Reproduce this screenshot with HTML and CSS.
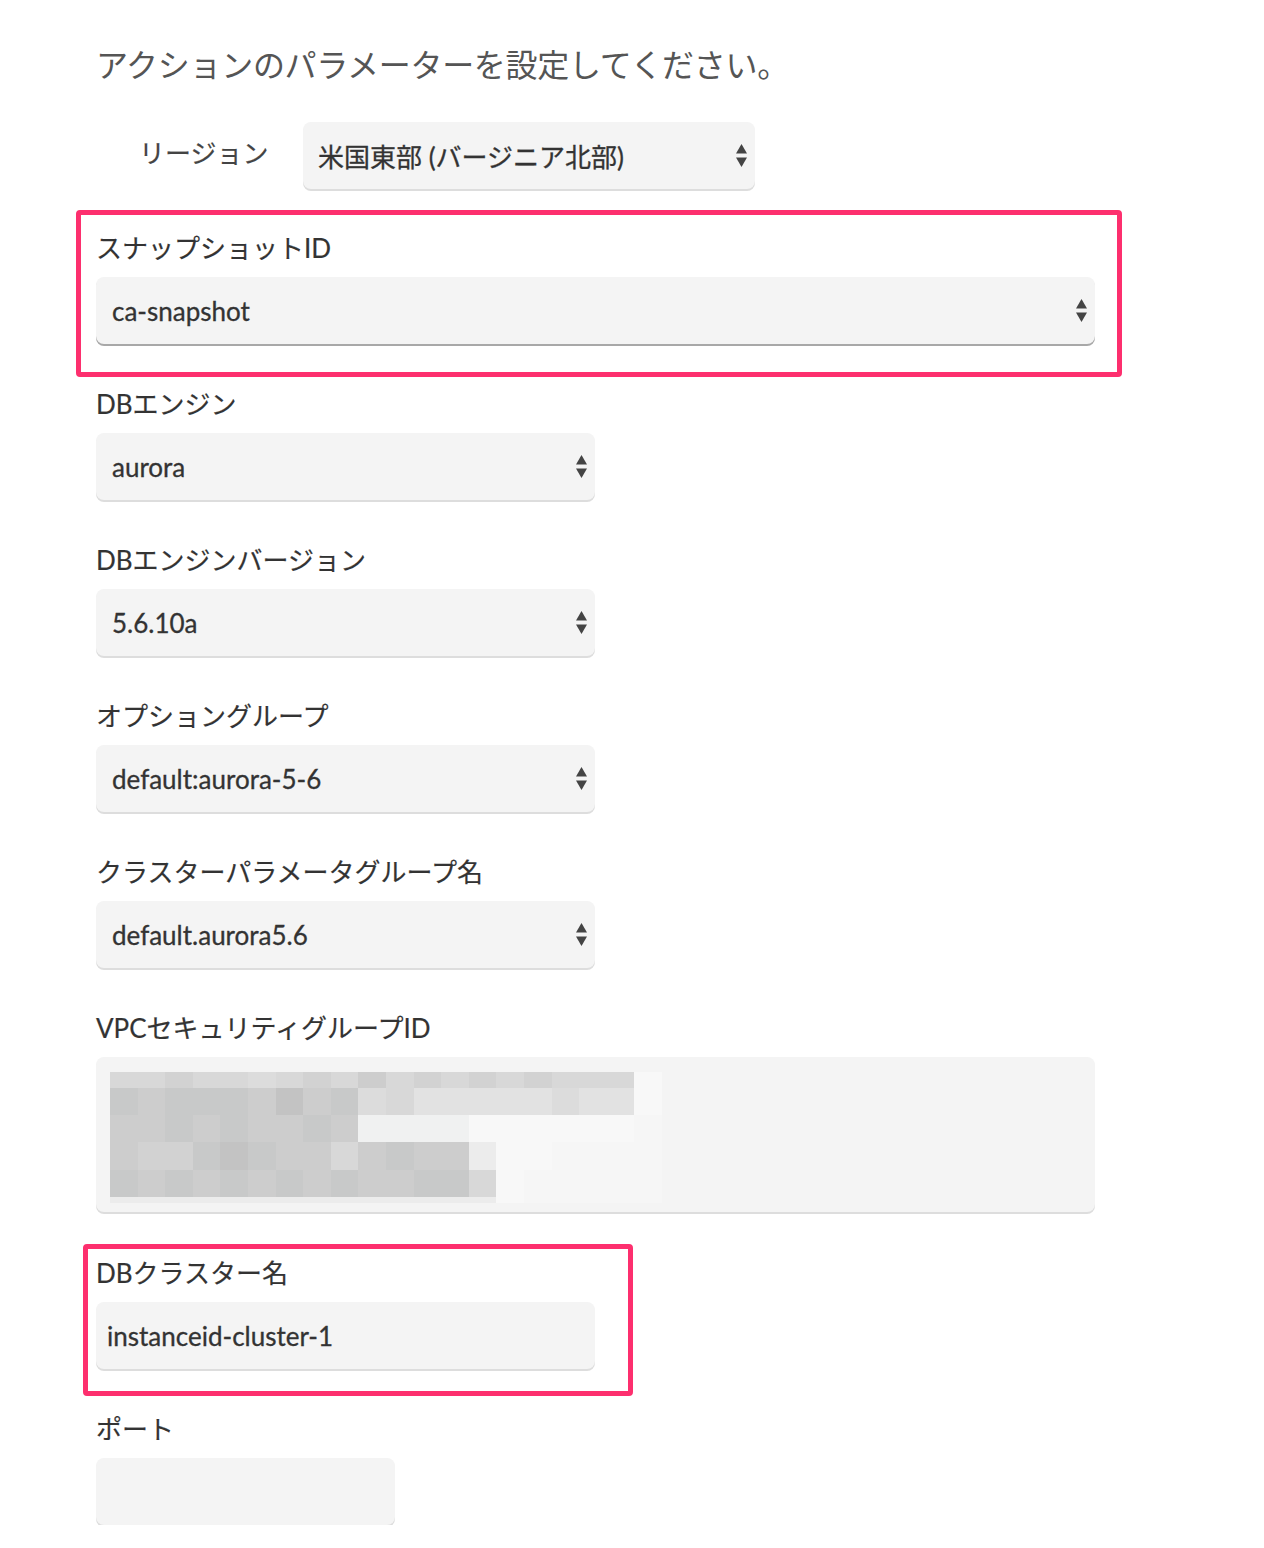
FILE: index.html
```html
<!DOCTYPE html>
<html lang="ja">
<head>
<meta charset="utf-8">
<title>アクションのパラメーター</title>
<link rel="stylesheet" href="styles.css">
</head>
<body>
<main class="form">
  <h1 class="title">アクションのパラメーターを設定してください。</h1>

  <div class="region-row">
    <span class="region-label">リージョン</span>
    <div class="control select region-select">
      <span class="value">米国東部 (バージニア北部)</span>
      <svg class="arrows" width="11" height="25" viewBox="0 0 11 25"><polygon points="0,10.5 5.5,1 11,10.5"/><polygon points="0,14.5 11,14.5 5.5,24"/></svg>
    </div>
  </div>

  <div class="highlight hl-snapshot">
    <div class="label">スナップショットID</div>
    <div class="control select full focused">
      <span class="value">ca-snapshot</span>
      <svg class="arrows" width="11" height="25" viewBox="0 0 11 25"><polygon points="0,10.5 5.5,1 11,10.5"/><polygon points="0,14.5 11,14.5 5.5,24"/></svg>
    </div>
  </div>

  <div class="field">
    <div class="label">DBエンジン</div>
    <div class="control select half">
      <span class="value">aurora</span>
      <svg class="arrows" width="11" height="25" viewBox="0 0 11 25"><polygon points="0,10.5 5.5,1 11,10.5"/><polygon points="0,14.5 11,14.5 5.5,24"/></svg>
    </div>
  </div>

  <div class="field">
    <div class="label">DBエンジンバージョン</div>
    <div class="control select half">
      <span class="value">5.6.10a</span>
      <svg class="arrows" width="11" height="25" viewBox="0 0 11 25"><polygon points="0,10.5 5.5,1 11,10.5"/><polygon points="0,14.5 11,14.5 5.5,24"/></svg>
    </div>
  </div>

  <div class="field">
    <div class="label">オプショングループ</div>
    <div class="control select half">
      <span class="value">default:aurora-5-6</span>
      <svg class="arrows" width="11" height="25" viewBox="0 0 11 25"><polygon points="0,10.5 5.5,1 11,10.5"/><polygon points="0,14.5 11,14.5 5.5,24"/></svg>
    </div>
  </div>

  <div class="field">
    <div class="label">クラスターパラメータグループ名</div>
    <div class="control select half">
      <span class="value">default.aurora5.6</span>
      <svg class="arrows" width="11" height="25" viewBox="0 0 11 25"><polygon points="0,10.5 5.5,1 11,10.5"/><polygon points="0,14.5 11,14.5 5.5,24"/></svg>
    </div>
  </div>

  <div class="field field-vpc">
    <div class="label">VPCセキュリティグループID</div>
    <div class="control textarea full">
      <div class="mosaic">
        <i class="g5"></i><i class="g5"></i><i class="g4"></i><i class="g5"></i><i class="g5"></i><i class="g6"></i><i class="g5"></i><i class="g4"></i><i class="g5"></i><i class="g3"></i><i class="g5"></i><i class="g4"></i><i class="g5"></i><i class="g4"></i><i class="g5"></i><i class="g4"></i><i class="g5"></i><i class="g5"></i><i class="g5"></i><i class="f1"></i>
        <i class="g2"></i><i class="g3"></i><i class="g2"></i><i class="g2"></i><i class="g2"></i><i class="g3"></i><i class="g1"></i><i class="g3"></i><i class="g2"></i><i class="g6"></i><i class="g5"></i><i class="g7"></i><i class="g7"></i><i class="g7"></i><i class="g7"></i><i class="g7"></i><i class="g6"></i><i class="g7"></i><i class="g7"></i><i class="f1"></i>
        <i class="g3"></i><i class="g3"></i><i class="g2"></i><i class="g3"></i><i class="g2"></i><i class="g3"></i><i class="g3"></i><i class="g2"></i><i class="g3"></i><i class="g9"></i><i class="g9"></i><i class="g9"></i><i class="g9"></i><i class="f1"></i><i class="f1"></i><i class="f1"></i><i class="f1"></i><i class="f1"></i><i class="f1"></i><i class="f2"></i>
        <i class="g3"></i><i class="g4"></i><i class="g4"></i><i class="g2"></i><i class="g1"></i><i class="g2"></i><i class="g3"></i><i class="g3"></i><i class="g5"></i><i class="g3"></i><i class="g2"></i><i class="g3"></i><i class="g3"></i><i class="g8"></i><i class="f1"></i><i class="f1"></i><i class="f2"></i><i class="f2"></i><i class="f2"></i><i class="f2"></i>
        <i class="g2"></i><i class="g3"></i><i class="g2"></i><i class="g3"></i><i class="g2"></i><i class="g3"></i><i class="g2"></i><i class="g3"></i><i class="g2"></i><i class="g3"></i><i class="g3"></i><i class="g2"></i><i class="g2"></i><i class="g5"></i><i class="f1"></i><i class="f2"></i><i class="f2"></i><i class="f2"></i><i class="f2"></i><i class="f2"></i>
        <i class="g8"></i><i class="g8"></i><i class="g8"></i><i class="g8"></i><i class="g8"></i><i class="g8"></i><i class="g8"></i><i class="g8"></i><i class="g8"></i><i class="g8"></i><i class="g8"></i><i class="g8"></i><i class="g8"></i><i class="g8"></i><i class="f1"></i><i class="f2"></i><i class="f2"></i><i class="f2"></i><i class="f2"></i><i class="f2"></i>
      </div>
    </div>
  </div>

  <div class="highlight hl-cluster">
    <div class="label">DBクラスター名</div>
    <div class="control input half">
      <span class="value">instanceid-cluster-1</span>
    </div>
  </div>

  <div class="field field-port">
    <div class="label">ポート</div>
    <div class="control input quarter"></div>
  </div>
</main>
</body>
</html>
```

FILE: styles.css
```css
* { box-sizing: border-box; }

html, body {
  margin: 0;
  padding: 0;
  background: #ffffff;
}

body {
  font-family: Lato, "Noto Sans CJK JP", "Noto Sans", sans-serif;
  color: #333333;
}

.form {
  padding: 45px 0 0 96px;
  width: 1264px;
}

.title {
  margin: 0;
  font-size: 32px;
  line-height: 40px;
  font-weight: 400;
  color: #555555;
  letter-spacing: -0.3px;
}

.region-row {
  margin-top: 37px;
  display: flex;
  align-items: center;
  padding-left: 43px;
}

.region-label {
  width: 164px;
  font-size: 26px;
  line-height: 30px;
  color: #444444;
  padding-bottom: 5px;
  -webkit-text-stroke: 0.2px #444444;
}

.label {
  font-size: 26px;
  line-height: 30px;
  margin-bottom: 14px;
  color: #333333;
  white-space: nowrap;
  -webkit-text-stroke: 0.2px #333333;
}

.control {
  height: 67px;
  background: #f4f4f4;
  border-radius: 8px;
  box-shadow: 0 2px 0 #dddddd;
  display: flex;
  align-items: center;
  font-size: 26px;
  color: #333333;
}

.value {
  -webkit-text-stroke: 0.3px #333333;
}

.select {
  padding: 0 8px 0 16px;
  justify-content: space-between;
}

.select .arrows {
  fill: #444444;
  flex: none;
}

.region-select {
  width: 452px;
  padding-left: 15px;
}

.full { width: 999px; }
.half { width: 499px; }
.quarter { width: 299px; }

.focused {
  box-shadow: 0 2px 0 #a8a8a8;
}

.highlight {
  border: 5px solid #fd2f6e;
  border-radius: 4px;
}

.hl-snapshot {
  margin: 21px 0 0 -20px;
  width: 1046px;
  padding: 18px 22px 28px 15px;
}

.field {
  margin-top: 12px;
}

.field + .field {
  margin-top: 45px;
}

.textarea {
  height: 155px;
  align-items: flex-start;
  padding: 15px 0 0 14px;
}

.mosaic {
  display: grid;
  grid-template-columns: repeat(20, 27.6px);
  grid-template-rows: 16px 27px 27px 28px 27px 6px;
}

.mosaic i { display: block; }
.mosaic .g1 { background: #c3c3c3; }
.mosaic .g2 { background: #c8c9c9; }
.mosaic .g3 { background: #cdcdcd; }
.mosaic .g4 { background: #d2d2d2; }
.mosaic .g5 { background: #d8d8d8; }
.mosaic .g6 { background: #dcdcdc; }
.mosaic .g7 { background: #e2e2e2; }
.mosaic .g8 { background: #ececec; }
.mosaic .g9 { background: #f0f1f1; }
.mosaic .f1 { background: #f8f8f8; }
.mosaic .f2 { background: #f6f6f6; }

.hl-cluster {
  margin: 32px 0 0 -13px;
  width: 550px;
  padding: 9px 33px 22px 8px;
}

.input {
  padding-left: 11px;
}

.field-port {
  margin-top: 18px;
}
```
